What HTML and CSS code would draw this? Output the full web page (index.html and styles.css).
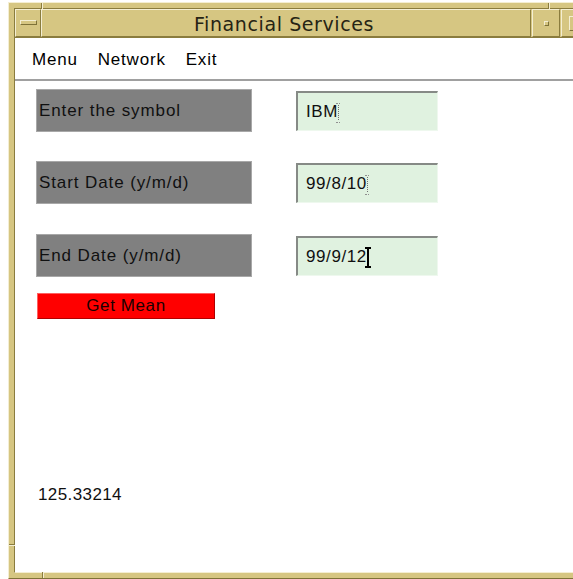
FILE: index.html
```html
<!DOCTYPE html>
<html lang="en">
<head>
<meta charset="utf-8">
<title>Financial Services</title>
<link rel="stylesheet" href="styles.css">
</head>
<body>
<div class="window">
  <span class="notch notch-top-left"></span>
  <span class="notch notch-top-right"></span>
  <span class="notch notch-left-bottom"></span>
  <span class="notch notch-bottom-left"></span>
  <div class="inner">
    <div class="titlebar">
      <div class="tb-btn tb-menu"><span class="bar"></span></div>
      <div class="tb-title">Financial Services</div>
      <div class="tb-btn tb-iconify"><span class="dot"></span></div>
      <div class="tb-btn tb-maximize"><span class="box"></span></div>
    </div>
    <div class="client">
      <nav class="menubar">
        <span class="menu-item">Menu</span>
        <span class="menu-item">Network</span>
        <span class="menu-item">Exit</span>
      </nav>
      <div class="form">
        <div class="rows">
          <div class="row">
            <div class="label">Enter the symbol</div>
            <div class="field">IBM<span class="caret caret-idle"></span></div>
          </div>
          <div class="row">
            <div class="label">Start Date (y/m/d)</div>
            <div class="field">99/8/10<span class="caret caret-idle"></span></div>
          </div>
          <div class="row row-end">
            <div class="label">End Date (y/m/d)</div>
            <div class="field">99/9/12<span class="caret caret-active"></span></div>
          </div>
        </div>
        <button class="action" type="button">Get Mean</button>
        <div class="result">125.33214</div>
      </div>
    </div>
  </div>
</div>
</body>
</html>
```

FILE: styles.css
```css
html, body {
  margin: 0;
  padding: 0;
  background: #ffffff;
  overflow: hidden;
}

/* window frame */
.window {
  position: relative;
  margin: 2px 0 0 8px;
  width: 576px;
  background: #d6c682;
  border-top: 1px solid #f4eed2;
  border-left: 1px solid #f4eed2;
  border-right: 1px solid #7e7238;
  border-bottom: 1px solid #7e7238;
  padding: 5px;
}

.inner {
  border-top: 1px solid #8a7c3e;
  border-left: 1px solid #8a7c3e;
  border-right: 1px solid #f4eed2;
  border-bottom: 1px solid #f4eed2;
}

/* resize handle separators on the frame */
.notch {
  position: absolute;
  background: #8a7c3e;
  box-shadow: 1px 0 0 #f4eed2;
}
.notch-top-left { left: 32px; top: 0; width: 1px; height: 6px; }
.notch-top-right { left: 539px; top: 0; width: 1px; height: 6px; }
.notch-bottom-left { left: 33px; bottom: 0; width: 1px; height: 6px; }
.notch-left-bottom {
  left: 0; top: 541px; width: 6px; height: 1px;
  box-shadow: 0 1px 0 #f4eed2;
}

/* title bar */
.titlebar {
  display: flex;
  height: 29px;
  background: #d6c682;
  border-bottom: 1px solid #8a7c3e;
  box-sizing: border-box;
}

.tb-btn {
  display: flex;
  align-items: center;
  justify-content: center;
  box-sizing: border-box;
  border-top: 1px solid #f4eed2;
  border-left: 1px solid #f4eed2;
  border-right: 1px solid #8a7c3e;
  border-bottom: 1px solid #8a7c3e;
}

.tb-menu { width: 26px; }
.tb-iconify { width: 28px; margin-left: 1px; }
.tb-maximize { width: 28px; margin-left: 1px; }

.tb-menu .bar {
  width: 15px;
  height: 3px;
  background: #d6c682;
  border-top: 1px solid #f4eed2;
  border-left: 1px solid #f4eed2;
  border-right: 1px solid #7e7238;
  border-bottom: 1px solid #7e7238;
  margin-top: -2px;
}

.tb-iconify .dot {
  width: 3px;
  height: 3px;
  background: #d6c682;
  border-top: 1px solid #f4eed2;
  border-left: 1px solid #f4eed2;
  border-right: 1px solid #7e7238;
  border-bottom: 1px solid #7e7238;
}

.tb-maximize .box {
  width: 13px;
  height: 13px;
  background: #d6c682;
  border-top: 1px solid #f4eed2;
  border-left: 1px solid #f4eed2;
  border-right: 1px solid #7e7238;
  border-bottom: 1px solid #7e7238;
  margin-left: 2px;
}

.tb-title {
  flex: 1;
  display: flex;
  align-items: center;
  justify-content: center;
  box-sizing: border-box;
  padding: 2px 4px 0 0;
  border-top: 1px solid #f4eed2;
  border-left: 1px solid #f4eed2;
  border-right: 1px solid #8a7c3e;
  border-bottom: 1px solid #8a7c3e;
  font-family: "DejaVu Sans", "Liberation Sans", sans-serif;
  font-size: 19px;
  letter-spacing: 0.6px;
  color: #262414;
}

/* client area */
.client {
  background: #ffffff;
  height: 534px;
  font-family: "Liberation Sans", Arial, sans-serif;
  color: #000000;
}

.menubar {
  display: flex;
  align-items: center;
  gap: 20px;
  height: 43px;
  padding: 2px 0 0 17px;
  box-sizing: border-box;
  border-bottom: 2px solid #a0a0a0;
  font-size: 17px;
  letter-spacing: 0.8px;
}

.form {
  padding: 8px 0 0 21px;
}

.rows {
  display: flex;
  flex-direction: column;
  gap: 29px;
}

.row {
  display: flex;
  align-items: flex-start;
  gap: 44px;
}
.row-end { margin-top: 1px; }

.label {
  display: flex;
  align-items: center;
  width: 216px;
  height: 43px;
  box-sizing: border-box;
  padding-left: 2px;
  background: #808080;
  border: 1px solid #a8a8a8;
  font-size: 17px;
  letter-spacing: 0.9px;
  color: #101010;
}

.field {
  display: flex;
  align-items: center;
  margin-top: 2px;
  width: 142px;
  height: 40px;
  box-sizing: border-box;
  padding-left: 8px;
  background: #e0f2e0;
  border-top: 2px solid #868a86;
  border-left: 2px solid #868a86;
  border-right: 1px solid #eef8ee;
  border-bottom: 1px solid #eef8ee;
  font-size: 17px;
  letter-spacing: 0.6px;
  color: #101010;
}

.caret {
  position: relative;
  display: inline-block;
  width: 5px;
  height: 20px;
  margin-left: -2px;
}

.caret-idle::before {
  content: "";
  position: absolute;
  left: 2px;
  top: 3px;
  height: 15px;
  border-left: 1px dotted #707070;
}
.caret-idle::after {
  content: "";
  position: absolute;
  left: 0;
  top: 1px;
  width: 4px;
  height: 18px;
  border-top: 1px dotted #909090;
  border-bottom: 1px dotted #909090;
}

.caret-active::before {
  content: "";
  position: absolute;
  left: 2px;
  top: 0;
  width: 2px;
  height: 21px;
  background: #000000;
}
.caret-active::after {
  content: "";
  position: absolute;
  left: 0;
  top: 0;
  width: 6px;
  height: 17px;
  border-top: 2px solid #000000;
  border-bottom: 2px solid #000000;
}

.action {
  display: block;
  margin: 16px 0 0 1px;
  width: 178px;
  height: 26px;
  padding: 0;
  background: #ff0000;
  border: 1px solid #b00000;
  border-top-color: #ff6060;
  border-left-color: #ff6060;
  font-family: "Liberation Sans", Arial, sans-serif;
  font-size: 17px;
  letter-spacing: 0.6px;
  color: #1a0000;
}

.result {
  margin: 166px 0 0 2px;
  line-height: 20px;
  font-size: 17px;
  letter-spacing: 0.4px;
  color: #101010;
}
```
